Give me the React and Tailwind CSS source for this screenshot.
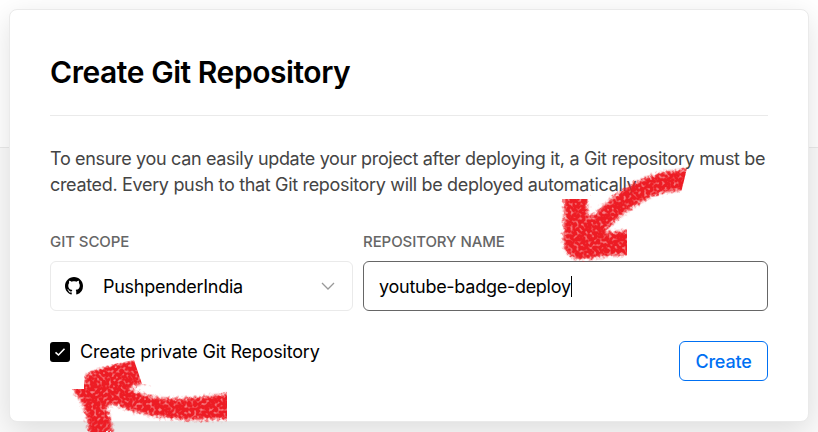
import React from "react";

function GitHubMark() {
  return (
    <svg viewBox="0 0 16 16" className="h-[18px] w-[18px] shrink-0" fill="#000">
      <path d="M8 0C3.58 0 0 3.58 0 8c0 3.54 2.29 6.53 5.47 7.59.4.07.55-.17.55-.38 0-.19-.01-.82-.01-1.49-2.01.37-2.53-.49-2.69-.94-.09-.23-.48-.94-.82-1.13-.28-.15-.68-.52-.01-.53.63-.01 1.08.58 1.23.82.72 1.21 1.87.87 2.33.66.07-.52.28-.87.51-1.07-1.78-.2-3.64-.89-3.64-3.95 0-.87.31-1.59.82-2.15-.08-.2-.36-1.02.08-2.12 0 0 .67-.21 2.2.82.64-.18 1.32-.27 2-.27s1.36.09 2 .27c1.53-1.04 2.2-.82 2.2-.82.44 1.1.16 1.92.08 2.12.51.56.82 1.27.82 2.15 0 3.07-1.87 3.75-3.65 3.95.29.25.54.73.54 1.48 0 1.07-.01 1.93-.01 2.2 0 .21.15.46.55.38A8.01 8.01 0 0 0 16 8c0-4.42-3.58-8-8-8z" />
    </svg>
  );
}

// Hand-drawn crayon arrows laid over the dialog.
function CrayonArrows() {
  return (
    <svg className="pointer-events-none absolute inset-0" width="818" height="432" viewBox="0 0 818 432">
      <defs>
        <filter id="crayon" filterUnits="userSpaceOnUse" x="0" y="0" width="818" height="432" colorInterpolationFilters="sRGB">
          <feTurbulence type="fractalNoise" baseFrequency="0.34" numOctaves="1" seed="11" result="grain" />
          <feGaussianBlur in="SourceGraphic" stdDeviation="1.7" result="soft" />
          <feDisplacementMap in="soft" in2="grain" scale="7" xChannelSelector="R" yChannelSelector="G" result="rough" />
          <feColorMatrix in="grain" type="matrix" values="0 0 0 0 1  0 0 0 0 1  0 0 0 0 1  0 0 4 0 -0.95" result="mask" />
          <feComposite in="rough" in2="mask" operator="in" result="mottled" />
          <feComponentTransfer in="rough" result="base">
            <feFuncA type="linear" slope="0.55" />
          </feComponentTransfer>
          <feMerge result="both">
            <feMergeNode in="base" />
            <feMergeNode in="mottled" />
          </feMerge>
          <feGaussianBlur in="both" stdDeviation="0.4" />
        </filter>
        <clipPath id="upper">
          <path d="M555 199 H590 V195 L640 160 H689 L681 193 L650 215 L627 225 V262 H555Z" />
        </clipPath>
        <clipPath id="lower">
          <path d="M68 389 H84 V370 L134 360 L142 384 L150 385 L227 388 V428 H115 V432 H68Z" />
        </clipPath>
      </defs>
      <g clipPath="url(#upper)">
        <g filter="url(#crayon)" fill="#ed1c24">
          <path d="M565 190 H587 L587 214 L593 217 Q609 199 628 187 Q655 170 700 169 L692 190 Q662 188 637 204 Q613 220 604 233 L640 230 V254 Q605 255 583 259 Q565 259 564 242Z" />
        </g>
      </g>
      <g clipPath="url(#lower)">
        <g filter="url(#crayon)" fill="#ed1c24">
          <path d="M75 380 L86 383 V375 Q105 365 140 359 L151 382 Q136 383 128 389 Q151 400 177 399 Q202 398 240 392 V418 Q204 420 180 419 Q145 416 122 407 Q106 401 106 408 Q112 420 113 445 H90 Q89 406 75 393Z" />
        </g>
      </g>
    </svg>
  );
}

export default function App() {
  return (
    <div className="relative h-[432px] w-[818px] overflow-hidden bg-[linear-gradient(to_bottom,#fff_147px,#eaeaea_147px,#eaeaea_148px,#fafafa_148px)] px-[9px] pt-[9px] font-['Inter','Liberation_Sans',sans-serif] text-black">
      <main className="h-[413px] w-[800px] rounded-lg border border-[#eaeaea] bg-white px-10 pt-10 shadow-[0_8px_30px_rgba(0,0,0,0.12)]">
        <h1 className="h-[65px] pt-[2px] text-[30px] leading-[40px] font-semibold tracking-[-0.44px] whitespace-nowrap">
          Create Git Repository
        </h1>
        <hr className="border-[#eaeaea]" />
        <p className="mt-[30px] text-[18px] leading-[26px] tracking-[-0.33px] whitespace-nowrap text-[#444]">
          To ensure you can easily update your project after deploying it, a Git repository must be
          <br />
          created. Every push to that Git repository will be deployed automatically.
        </p>
        <div className="mt-[33px] flex gap-2.5">
          <div className="w-[303px]">
            <label className="block h-[30px] text-[15px] leading-[22px] font-medium tracking-[-0.08px] whitespace-nowrap text-[#666]">GIT SCOPE</label>
            <button className="flex h-[50px] w-full items-center rounded-[6px] border border-[#eaeaea] pr-[16px] pl-[14px] text-left text-[18px] tracking-[-0.27px]">
              <GitHubMark />
              <span className="ml-5 flex-1 pt-px">PushpenderIndia</span>
              <svg className="h-4 w-4" viewBox="0 0 16 16" fill="none" stroke="#999" strokeWidth="1.3">
                <path d="M2 5 L8 11 L14 5" />
              </svg>
            </button>
          </div>
          <div className="w-[405px]">
            <label className="block h-[30px] text-[15px] leading-[22px] font-medium tracking-[-0.08px] whitespace-nowrap text-[#666]">REPOSITORY NAME</label>
            <div className="flex h-[50px] items-center rounded-[6px] border border-[#666] px-[15px] text-[18px] tracking-[-0.27px]">
              <span className="pt-px">youtube-badge-deploy</span>
              <span className="h-[21px] w-px bg-black" />
            </div>
          </div>
        </div>
        <div className="mt-[30px] flex items-start justify-between">
          <label className="mt-px flex h-5 items-center gap-2.5 text-[18px] tracking-[-0.2px]">
            <span className="flex h-5 w-5 items-center justify-center rounded-[3px] bg-black">
              <svg width="12" height="12" viewBox="0 0 12 12" fill="none" stroke="#fff" strokeWidth="1.6">
                <path d="M1.5 6.3 L4.5 9 L10.5 2.7" />
              </svg>
            </span>
            <span className="pb-[2px]">Create private Git Repository</span>
          </label>
          <button className="h-10 w-[89px] rounded-[6px] border border-[#0070f3] pt-px text-[18px] font-medium tracking-[-0.2px] text-[#0070f3]">
            Create
          </button>
        </div>
      </main>
      <CrayonArrows />
    </div>
  );
}
